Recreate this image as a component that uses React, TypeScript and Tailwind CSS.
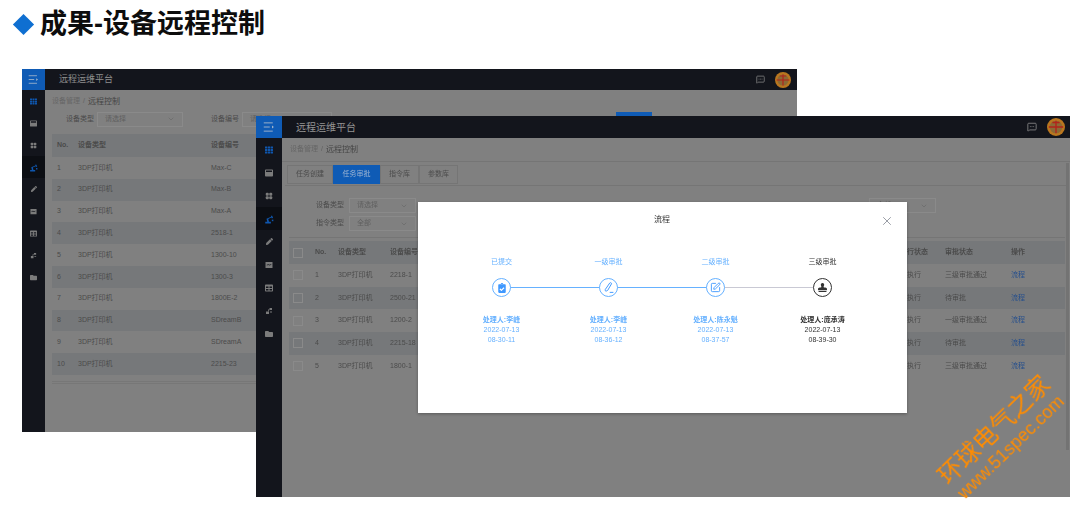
import { ChevronDown, MessageSquareMore, SquarePen, X } from 'lucide-react';
import { FaClipboardCheck, FaFolder, FaPen, FaStamp, FaTable, FaTh, FaWindowMaximize } from 'react-icons/fa';

const backRows = ['Max-C', 'Max-B', 'Max-A', '2518-1', '1300-10', '1300-3', '1800E-2', 'SDreamB', 'SDreamA', '2215-23'];

const frontRows = [
    { code: '2218-1', status: '三级审批通过' },
    { code: '2500-21', status: '待审批' },
    { code: '1200-2', status: '一级审批通过' },
    { code: '2215-18', status: '待审批' },
    { code: '1800-1', status: '三级审批通过' },
];

const steps = [
    { label: '已提交', person: '处理人:李峰', time: '08-30-11', icon: 'clipboard' },
    { label: '一级审批', person: '处理人:李峰', time: '08-36-12', icon: 'pen' },
    { label: '二级审批', person: '处理人:陈永魁', time: '08-37-57', icon: 'edit' },
    { label: '三级审批', person: '处理人:庞承涛', time: '08-39-30', icon: 'stamp' },
];

function ArmIcon({ size }: { size: number }) {
    return (
        <svg width={size} height={size} viewBox="0 0 16 16" fill="currentColor">
            <path d="M2 15h9v-2.500H8L6.800 8l5-2.400.8 1.400 2-1-1.800-3.500-1.700.8.400 1-7.500 3.200L5.200 12.500H2z" />
            <path d="M12.500 9h2.500v2.500h-2.500z" />
        </svg>
    );
}

function FlowIcon({ size }: { size: number }) {
    return (
        <svg width={size} height={size} viewBox="0 0 16 16" fill="currentColor">
            <path d="M9 2h5v4H9zM2 9h6v5H2zM10 9h4v2h-4z" />
            <path d="M6 5h3v1.400H7.400V9H6z" />
        </svg>
    );
}

function BlocksIcon({ size }: { size: number }) {
    return (
        <svg width={size} height={size} viewBox="0 0 16 16" fill="currentColor">
            <rect x="1.500" y="1.500" width="6" height="6" rx="2" />
            <rect x="8.500" y="1.500" width="6" height="6" rx="2" />
            <rect x="1.500" y="8.500" width="6" height="6" rx="2" />
            <rect x="8.500" y="8.500" width="6" height="6" rx="2" />
        </svg>
    );
}

function ChartBoxIcon({ size }: { size: number }) {
    return (
        <svg width={size} height={size} viewBox="0 0 16 16" fill="currentColor">
            <path fillRule="evenodd" d="M1 2h14v12H1zM3.500 7.500v1.400l3-1 3 1 3-1.400V6.200l-3 1.300-3-1z" />
        </svg>
    );
}

function MenuIcon({ size }: { size: number }) {
    return (
        <svg width={size} height={size} viewBox="0 0 16 16" fill="none" stroke="currentColor" strokeWidth="1.200">
            <path d="M1 2.500h12M1 8h8M1 13.500h12" />
            <path d="M12 6l2.500 2-2.500 2z" fill="currentColor" stroke="none" />
        </svg>
    );
}

function Avatar({ size }: { size: number }) {
    return (
        <svg width={size} height={size} viewBox="0 0 20 20">
            <circle cx="10" cy="10" r="10" fill="#b9761f" />
            <circle cx="10" cy="10" r="7" fill="#8b6a35" />
            <path d="M2 10h16M10 3v14M6 5h8" stroke="#b3231b" strokeWidth="1.500" fill="none" />
        </svg>
    );
}

function Sidebar({ rowClass, iconSize, widthClass }: { rowClass: string; iconSize: number; widthClass: string }) {
    const icons = [
        <FaTh size={iconSize} className="text-[#0f56ad]" />,
        <FaWindowMaximize size={iconSize} />,
        <BlocksIcon size={iconSize} />,
        <span className="text-[#0f56ad]">
            <ArmIcon size={iconSize + 2} />
        </span>,
        <FaPen size={iconSize - 1} />,
        <ChartBoxIcon size={iconSize} />,
        <FaTable size={iconSize} />,
        <FlowIcon size={iconSize} />,
        <FaFolder size={iconSize} />,
    ];
    return (
        <div className={`flex shrink-0 flex-col bg-[#13151c] text-[#7b7b7b] ${widthClass}`}>
            {icons.map((icon, i) => (
                <div key={i} className={`flex items-center justify-center ${rowClass} ${i === 3 ? 'bg-[#0c0e13]' : ''}`}>
                    {icon}
                </div>
            ))}
        </div>
    );
}

function FilterSelect({ text, widthClass }: { text: string; widthClass: string }) {
    return (
        <div className={`flex h-[15px] items-center justify-between border border-[#8a8a8a] px-[7px] text-[7px] text-[#5f5f5f] ${widthClass}`}>
            <span>{text}</span>
            <ChevronDown size={8} className="text-[#686868]" />
        </div>
    );
}

function BackWindow() {
    return (
        <div className="absolute top-[69px] left-[22px] flex h-[363px] w-[775px] flex-col bg-[#808080] text-[#4b4b4b]">
            <div className="flex h-[21px] shrink-0 items-center bg-[#13151c]">
                <div className="flex h-full w-[23px] items-center justify-center bg-[#0f5bb5] text-[#a8b8cc]">
                    <MenuIcon size={11} />
                </div>
                <span className="ml-[14px] text-[9px] text-[#8e8e8e]">远程运维平台</span>
                <div className="ml-auto mr-[6px] flex items-center gap-[10px]">
                    <MessageSquareMore size={9} className="text-[#8a8a8a]" />
                    <Avatar size={16} />
                </div>
            </div>
            <div className="flex min-h-0 flex-1">
                <Sidebar widthClass="w-[23px]" rowClass="h-[22px]" iconSize={7} />
                <div className="flex flex-1 flex-col pl-[7px]">
                    <div className="mt-[6px] flex h-[11px] items-center text-[7px]">
                        <span className="text-[#666]">设备管理</span>
                        <span className="mx-[3px] text-[#5f5f5f]">/</span>
                        <span className="text-[8px] text-[#444]">远程控制</span>
                    </div>
                    <div className="mt-[5px] flex h-[14px] items-center text-[7px]">
                        <span className="ml-[14px] w-[31px]">设备类型</span>
                        <FilterSelect text="请选择" widthClass="w-[86px]" />
                        <span className="ml-[28px] w-[31px]">设备编号</span>
                        <FilterSelect text="请选择" widthClass="w-[90px]" />
                    </div>
                    <div className="mt-[8px] flex flex-col text-[7px]">
                        <div className="grid h-[23px] grid-cols-[21px_133px_1fr] items-center bg-[#76787a] pl-[5px] font-bold">
                            <span>No.</span>
                            <span>设备类型</span>
                            <span>设备编号</span>
                        </div>
                        {backRows.map((code, i) => (
                            <div key={code} className={`grid h-[21.800px] grid-cols-[21px_133px_1fr] items-center pl-[5px] ${i % 2 === 1 ? 'bg-[#76787a]' : ''}`}>
                                <span>{i + 1}</span>
                                <span>3DP打印机</span>
                                <span>{code}</span>
                            </div>
                        ))}
                        <div className="mt-[6px] h-[3px] border-y border-[#777]" />
                    </div>
                </div>
            </div>
            <div className="absolute top-[43px] left-[594px] h-[4px] w-[36px] bg-[#0f5bb5]" />
        </div>
    );
}

function FrontWindow() {
    const cols = 'grid-cols-[26px_23px_52px_510px_45px_66px_1fr]';
    return (
        <div className="absolute top-[116px] left-[256px] flex h-[381px] w-[814px] flex-col bg-[#808080] text-[#4b4b4b]">
            <div className="flex h-[22px] shrink-0 items-center bg-[#13151c]">
                <div className="flex h-full w-[26px] items-center justify-center bg-[#0f5bb5] text-[#a8b8cc]">
                    <MenuIcon size={12} />
                </div>
                <span className="ml-[14px] text-[10px] text-[#939393]">远程运维平台</span>
                <div className="ml-auto mr-[5px] flex items-center gap-[10px]">
                    <MessageSquareMore size={10} className="text-[#8a8a8a]" />
                    <Avatar size={18} />
                </div>
            </div>
            <div className="flex min-h-0 flex-1">
                <Sidebar widthClass="w-[26px]" rowClass="h-[23px]" iconSize={8} />
                <div className="relative flex flex-1 flex-col">
                    <div className="flex h-[24px] shrink-0 items-center border-b border-[#757575] pl-[8px] text-[7px]">
                        <span className="text-[#666]">设备管理</span>
                        <span className="mx-[3px] text-[#5f5f5f]">/</span>
                        <span className="text-[8px] text-[#444]">远程控制</span>
                    </div>
                    <div className="ml-[5px] mt-[3px] flex h-[19px] w-fit shrink-0 items-stretch text-[7px]">
                        <div className="flex w-[46px] items-center justify-center border border-[#757575]">任务创建</div>
                        <div className="flex w-[47px] items-center justify-center bg-[#0f5bb5] text-[#9db4d2]">任务审批</div>
                        <div className="flex w-[39px] items-center justify-center border border-[#757575]">指令库</div>
                        <div className="flex w-[39px] items-center justify-center border border-[#757575]">参数库</div>
                    </div>
                    <div className="mx-[3px] mt-[1px] border-t border-[#757575] pb-[12px]" />
                    <div className="flex flex-col gap-[3px] pl-[34px] text-[7px]">
                        <div className="flex items-center">
                            <span className="w-[33px]">设备类型</span>
                            <FilterSelect text="请选择" widthClass="w-[67px]" />
                            <div className="ml-[453px]">
                                <FilterSelect text="全部" widthClass="w-[67px]" />
                            </div>
                        </div>
                        <div className="flex items-center">
                            <span className="w-[33px]">指令类型</span>
                            <FilterSelect text="全部" widthClass="w-[67px]" />
                        </div>
                    </div>
                    <div className="ml-[7px] mr-[5px] mt-[6px] border-t border-[#757575] pt-[3px] text-[7px]">
                        <div className={`grid h-[23px] ${cols} items-center bg-[#76787a] font-bold`}>
                            <span className="ml-[4px] block h-[10px] w-[10px] border border-[#8a8a8a]" />
                            <span>No.</span>
                            <span>设备类型</span>
                            <span>设备编号</span>
                            <span>执行状态</span>
                            <span>审批状态</span>
                            <span>操作</span>
                        </div>
                        {frontRows.map((row, i) => (
                            <div key={row.code} className={`grid h-[22.700px] ${cols} items-center ${i % 2 === 1 ? 'bg-[#76787a]' : ''}`}>
                                <span className="ml-[4px] block h-[10px] w-[10px] border border-[#8a8a8a]" />
                                <span>{i + 1}</span>
                                <span>3DP打印机</span>
                                <span>{row.code}</span>
                                <span>待执行</span>
                                <span>{row.status}</span>
                                <span className="text-[#264f8c]">流程</span>
                            </div>
                        ))}
                    </div>
                    <div className="absolute top-[25px] right-[1px] h-[287px] w-[3px] bg-[#737373]" />
                </div>
            </div>
        </div>
    );
}

function StepIcon({ icon, color }: { icon: string; color: string }) {
    if (icon === 'clipboard') return <FaClipboardCheck size={10} color={color} />;
    if (icon === 'edit') return <SquarePen size={11} color={color} />;
    if (icon === 'stamp') return <FaStamp size={9} color={color} />;
    return (
        <svg width="13" height="13" viewBox="0 0 16 16" fill="none" stroke={color} strokeWidth="1.200">
            <path d="M4 10.500 9.500 2.500c.8-1 2.600-.2 2.200 1L7 11.500c-.8 1-3 1.200-3 .4zM9.500 14H14" />
        </svg>
    );
}

function FlowModal() {
    return (
        <div className="absolute top-[202px] left-[418px] flex h-[211px] w-[489px] flex-col bg-white shadow-[0_1px_3px_rgba(0,0,0,0.3)]">
            <div className="relative flex h-[36px] shrink-0 items-center justify-center pr-[1px] text-[8px] text-[#333]">
                <span>流程</span>
                <X size={14} strokeWidth={1.200} className="absolute top-[12px] right-[13px] text-[#6f7480]" />
            </div>
            <div className="relative ml-[30px] mt-[19px] flex w-[428px] text-center">
                {steps.map((step, i) => {
                    const done = i < 3;
                    const color = done ? '#3f98ff' : '#333333';
                    return (
                        <div key={step.label} className={`flex w-[107px] flex-col items-center ${done ? 'text-[#66b1ff]' : 'text-[#333]'}`}>
                            <span className="h-[10px] text-[7px] leading-[10px]">{step.label}</span>
                            <div className="relative mt-[11px] flex h-[19px] w-full items-center justify-center">
                                {i < 3 && <div className={`absolute top-[9px] left-[53px] h-px w-[107px] ${i === 2 ? 'bg-[#c9c9d4]' : 'bg-[#66b1ff]'}`} />}
                                <div className={`relative flex h-[19px] w-[19px] items-center justify-center rounded-full border bg-white ${done ? 'border-[#66b1ff]' : 'border-[#333]'}`}>
                                    <StepIcon icon={step.icon} color={color} />
                                </div>
                            </div>
                            <span className="mt-[18px] h-[10px] text-[7px] font-bold leading-[10px]">{step.person}</span>
                            <span className="text-[7px] leading-[10px]">2022-07-13</span>
                            <span className="text-[7px] leading-[10px]">{step.time}</span>
                        </div>
                    );
                })}
            </div>
        </div>
    );
}

export default function App() {
    return (
        <div className="relative h-[509px] w-[1080px] overflow-hidden bg-white font-['Liberation_Sans','Noto_Sans_CJK_SC',sans-serif]">
            <div className="flex items-center pl-[16px] pt-[8px]">
                <div className="h-[15px] w-[15px] rotate-45 bg-[#0f6fd1]" />
                <h1 className="ml-[9px] text-[27px] font-bold leading-[32px] text-[#0d0d0d]">成果-设备远程控制</h1>
            </div>
            <div className="absolute inset-0 blur-[0.4px]">
                <BackWindow />
                <FrontWindow />
                <FlowModal />
            </div>
            <div className="absolute top-[413px] left-[926px] w-[150px] origin-center -rotate-[44deg] text-center text-[#ff8c00]">
                <div className="text-[24px] leading-[28px]">环球电气之家</div>
                <div className="text-[18px] leading-[20px]">www.51spec.com</div>
            </div>
        </div>
    );
}
